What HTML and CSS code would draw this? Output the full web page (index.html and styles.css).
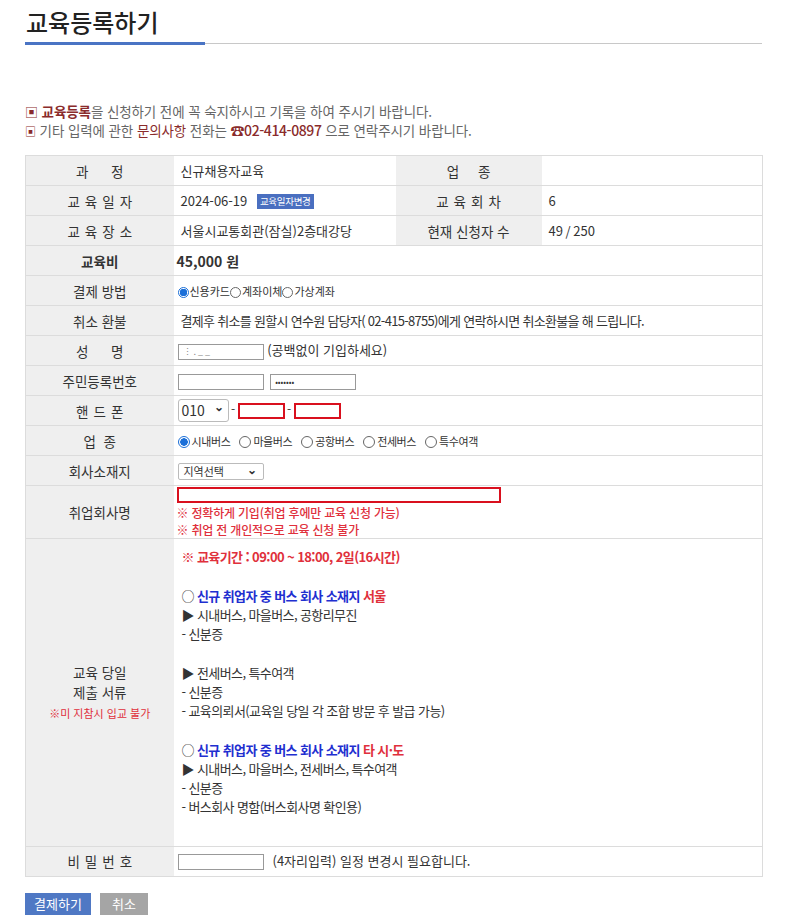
FILE: index.html
```html
<!DOCTYPE html>
<html lang="ko">
<head>
  <meta charset="UTF-8">
  <meta name="viewport" content="width=device-width, initial-scale=1.0">
  <title>교육등록하기</title>
  <link rel="stylesheet" href="styles.css">
</head>
<body>
  <div class="wrap">
    <div class="title-bar">
      <h1>교육등록하기</h1>
      <div class="title-rest"></div>
    </div>

    <div class="notice">
      <p><span class="sq">▣</span> <b class="dark">교육등록</b>을 신청하기 전에 꼭 숙지하시고 기록을 하여 주시기 바랍니다.</p>
      <p><span class="sq sm">▣</span> 기타 입력에 관한 <span class="dark">문의사항</span> 전화는 <b class="dark tel">☎02-414-0897</b> 으로 연락주시기 바랍니다.</p>
    </div>

    <table class="form-table">
      <colgroup>
        <col class="c1"><col class="c2"><col class="c3"><col class="c4">
      </colgroup>
      <tr>
        <th>과&nbsp;&nbsp;&nbsp;&nbsp;&nbsp;&nbsp;정</th>
        <td>신규채용자교육</td>
        <th>업&nbsp;&nbsp;&nbsp;&nbsp;&nbsp;종</th>
        <td></td>
      </tr>
      <tr>
        <th class="spaced">교육일자</th>
        <td>2024-06-19 <span class="badge">교육일자변경</span></td>
        <th class="spaced">교육회차</th>
        <td>6</td>
      </tr>
      <tr>
        <th class="spaced">교육장소</th>
        <td>서울시교통회관(잠실)2층대강당</td>
        <th>현재 신청자 수</th>
        <td>49&thinsp;/&thinsp;250</td>
      </tr>
      <tr>
        <th class="strong">교육비</th>
        <td colspan="3" class="fee">45,000 원</td>
      </tr>
      <tr>
        <th>결제 방법</th>
        <td colspan="3" class="small">
          <label class="radio on"></label>신용카드<label class="radio"></label>계좌이체<label class="radio"></label>가상계좌
        </td>
      </tr>
      <tr>
        <th>취소 환불</th>
        <td colspan="3" class="tight">결제후 취소를 원할시 연수원 담당자( 02-415-8755)에게 연락하시면 취소환불을 해 드립니다.</td>
      </tr>
      <tr>
        <th>성&nbsp;&nbsp;&nbsp;&nbsp;&nbsp;&nbsp;명</th>
        <td colspan="3"><input class="box" type="text" value="&#8942; . _ _"> (공백없이 기입하세요)</td>
      </tr>
      <tr>
        <th>주민등록번호</th>
        <td colspan="3"><input class="box" type="text"> <input class="box pw" type="text" value="•••••••"></td>
      </tr>
      <tr>
        <th class="spaced">핸드폰</th>
        <td colspan="3" class="phone">
          <span class="sel-phone">010 <span class="caret">⌄</span></span><span class="dash">-</span><input class="box red short" type="text"><span class="dash">-</span><input class="box red short" type="text">
        </td>
      </tr>
      <tr>
        <th>업&nbsp;&nbsp;종</th>
        <td colspan="3" class="small bus">
          <label class="radio on"></label>시내버스<label class="radio"></label>마을버스<label class="radio"></label>공항버스<label class="radio"></label>전세버스<label class="radio"></label>특수여객
        </td>
      </tr>
      <tr>
        <th>회사소재지</th>
        <td colspan="3"><span class="sel-area">지역선택 <span class="caret">⌄</span></span></td>
      </tr>
      <tr class="company-row">
        <th>취업회사명</th>
        <td colspan="3" class="company">
          <input class="box red long" type="text">
          <p class="warn">※ 정확하게 기입(취업 후에만 교육 신청 가능)</p>
          <p class="warn">※ 취업 전 개인적으로 교육 신청 불가</p>
        </td>
      </tr>
      <tr class="docs-row">
        <th class="docs-label">
          교육 당일<br>제출 서류<br><span class="warn-sm">※미 지참시 입교 불가</span>
        </th>
        <td colspan="3" class="docs">
          <p class="period">※ 교육기간 : 09:00 ~ 18:00, 2일(16시간)</p>
          <p>&nbsp;</p>
          <p>○ <span class="blue">신규 취업자 중 버스 회사 소재지</span> <span class="red">서울</span></p>
          <p>▶ 시내버스, 마을버스, 공항리무진</p>
          <p>- 신분증</p>
          <p>&nbsp;</p>
          <p>▶ 전세버스, 특수여객</p>
          <p>- 신분증</p>
          <p>- 교육의뢰서(교육일 당일 각 조합 방문 후 발급 가능)</p>
          <p>&nbsp;</p>
          <p>○ <span class="blue">신규 취업자 중 버스 회사 소재지</span> <span class="red">타 시·도</span></p>
          <p>▶ 시내버스, 마을버스, 전세버스, 특수여객</p>
          <p>- 신분증</p>
          <p>- 버스회사 명함(버스회사명 확인용)</p>
        </td>
      </tr>
      <tr>
        <th class="spaced">비밀번호</th>
        <td colspan="3"><input class="box" type="text"><span class="hint">(4자리입력) 일정 변경시 필요합니다.</span></td>
      </tr>
    </table>

    <div class="actions">
      <button class="btn pay">결제하기</button>
      <button class="btn cancel">취소</button>
    </div>
  </div>
</body>
</html>
```

FILE: styles.css
```css
body { margin: 0; font-family: "Noto Sans CJK KR", "Noto Sans", sans-serif; color: #333; background: #fff; }
.wrap { width: 737px; padding: 0 0 0 25px; }

.title-bar { display: flex; align-items: flex-end; padding-top: 4px; }
.title-bar h1 { width: 179px; margin: 0; padding: 0 0 2px 1px; font-size: 24px; font-weight: 500; line-height: 36px; color: #222; border-bottom: 3px solid #4a74c4; }
.title-rest { flex: 1; border-bottom: 1px solid #c8c8c8; margin-bottom: 1px; }

.notice { margin-top: 57px; font-size: 13.5px; color: #666; letter-spacing: -0.1px; }
.notice p { margin: 0; line-height: 18px; }
.sq { color: #8a2b2b; font-size: 13px; }
.sq.sm { font-size: 11px; }
.dark { color: #8a2b2b; }
.tel { font-size: 14px; font-weight: 500; letter-spacing: -0.4px; }

.form-table { width: 737px; margin-top: 15px; border-collapse: collapse; table-layout: fixed; font-size: 13px; line-height: 18px; border: 1px solid #dcdcdc; }
.c1 { width: 148px; } .c2 { width: 222px; } .c3 { width: 146px; } .c4 { width: 221px; }
.form-table tr { height: 30px; }
.form-table th, .form-table td { padding: 0; border-bottom: 1px solid #dcdcdc; }
.form-table th { background: #efefef; font-weight: 400; font-size: 13.5px; color: #333; text-align: center; }
.form-table td { padding-left: 7px; color: #333; }
.form-table th.spaced { letter-spacing: 5px; text-indent: 5px; }
.form-table th.strong { font-weight: 700; }
.fee { font-weight: 700; font-size: 14px; padding-left: 3px !important; }
.tight { letter-spacing: -0.7px; }

.badge { display: inline-block; margin-left: 6px; padding: 0 3px; background: #4a6fc0; color: #fff; font-size: 9.5px; line-height: 15px; vertical-align: 1px; letter-spacing: -0.3px; }

.small { font-size: 11px; }
.radio { display: inline-block; width: 11px; height: 11px; border: 1px solid #666; border-radius: 50%; vertical-align: -2px; box-sizing: border-box; margin-right: 1px; }
.radio.on { border: 1px solid #1b6fd8; background: radial-gradient(circle, #1b6fd8 0 3.5px, #fff 4px); }
.small .radio:first-child { margin-left: -3px; }
.bus { letter-spacing: -0.4px; }
.bus .radio { width: 12px; height: 12px; margin: 0 2px 0 9px; }
.bus .radio:first-child { margin-left: -3px; }

.box { width: 86px; height: 16px; box-sizing: border-box; border: 1px solid #999; padding: 0 4px; font-size: 9px; color: #888; font-family: inherit; vertical-align: middle; margin: 0 0 0 -3px; }
.box.pw { color: #333; font-size: 8px; margin-left: 3px; }
.box.red { border: 2px solid #d9101e; }
.box.short { width: 47px; margin-left: 0; }
.box.long { display: block; width: 324px; margin: 1px 0 0 -4px; }
.dash { display: inline-block; width: 9px; text-align: center; font-size: 12px; }
.hint { margin-left: 9px; }

.sel-phone { display: inline-block; width: 51px; height: 23px; box-sizing: border-box; border: 1px solid #bbb; border-radius: 3px; padding: 0 0 0 3px; line-height: 21px; font-size: 14px; vertical-align: middle; margin-left: -3px; }
.sel-area { display: inline-block; width: 86px; height: 17px; box-sizing: border-box; border: 1px solid #bbb; border-radius: 2px; padding: 0 0 0 5px; line-height: 15px; font-size: 11px; vertical-align: middle; margin-left: -3px; }
.caret { float: right; margin-right: 4px; font-size: 12px; font-weight: 700; line-height: 12px; }
.sel-area .caret { margin-right: 6px; line-height: 9px; }

.form-table tr.company-row { height: 52px; }
.form-table td.company { padding: 0 0 0 7px; vertical-align: top; }
.warn { margin: 0 0 0 -4px; color: #e0303c; font-size: 12px; font-weight: 500; line-height: 17px; letter-spacing: -0.2px; }
.company .warn:first-of-type { margin-top: 1px; }

.docs-label { line-height: 20px; }
.warn-sm { color: #e0303c; font-size: 11px; }
.docs { padding: 8px 0 29px 8px !important; font-size: 13px; letter-spacing: -0.6px; }
.docs p { margin: 0; line-height: 19.25px; }
.docs .period { color: #e0303c; font-weight: 700; }
.blue { color: #1f2fd0; font-weight: 700; }
.red { color: #e0303c; font-weight: 700; }

.actions { margin-top: 16px; display: flex; gap: 9px; }
.btn { height: 22px; border: none; color: #fff; font-family: inherit; font-size: 13px; padding: 0; cursor: pointer; }
.btn.pay { width: 66px; background: #4f78c4; }
.btn.cancel { width: 48px; background: #a5a5a5; }
```
